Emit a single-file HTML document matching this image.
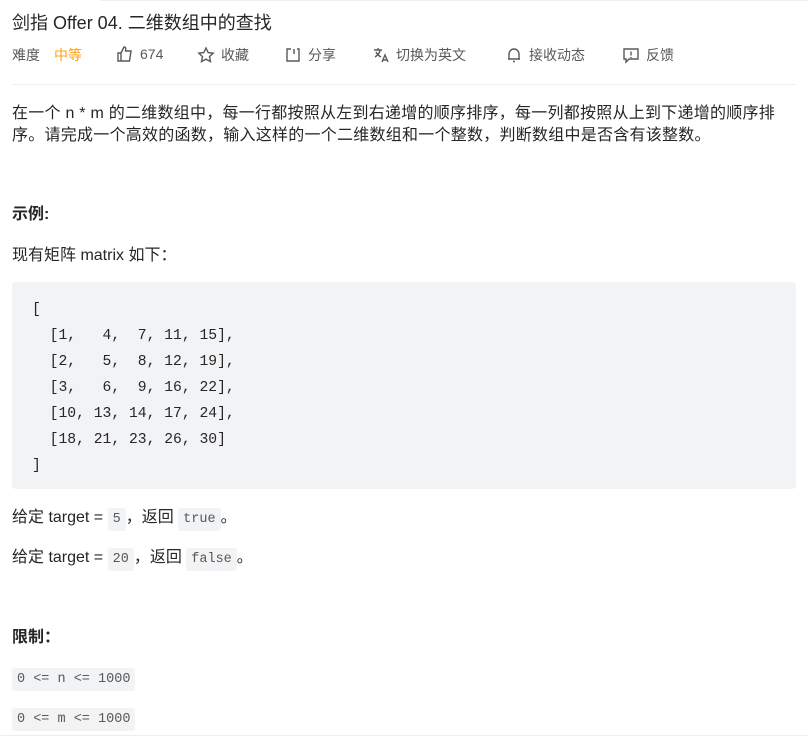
<!DOCTYPE html>
<html><head><meta charset="utf-8"><style>
body{margin:0;width:808px;height:738px;background:#fff;font-family:"Liberation Sans","Noto Sans CJK SC",sans-serif;color:#262626;position:relative;overflow:hidden}
.a{position:absolute;white-space:nowrap}
.t{left:12px;top:9px;font-size:18px;color:#262626}
.m{top:45px;font-size:14px;color:#595959;display:flex;align-items:center;gap:6px}
.p{left:12px;font-size:16px;line-height:22px;color:#262626}
code{font-family:"Liberation Mono","DejaVu Sans Mono",monospace;background:#f2f3f5;border-radius:3px;padding:4px 5px;font-size:13.5px;color:#595959}
pre{position:absolute;left:12px;top:282px;width:784px;height:207px;margin:0;background:#f2f3f5;border-radius:4px;font-family:"Liberation Mono","DejaVu Sans Mono",monospace;font-size:14.7px;line-height:26px;color:#262626;box-sizing:border-box;padding:15px 0 0 20px}
svg{stroke:#595959;fill:none;stroke-width:1.4}
</style></head><body>
<div class="a" style="left:100px;right:0;top:0;height:1px;background:#eee"></div>
<div class="a t">剑指 Offer 04. 二维数组中的查找</div>
<div class="a m" style="left:12px">难度 <span style="color:#ffa116;margin-left:8px">中等</span></div>
<div class="a m" style="left:116px"><svg width="18" height="18" viewBox="0 0 18 18"><path d="M2 8h3v8H2zM5 8l3-6c2 0 2 2 1.5 4H15l-1.5 10H5"/></svg>674</div>
<div class="a m" style="left:197px"><svg width="18" height="18" viewBox="0 0 18 18"><path d="M9 2l2.2 4.6 5 .6-3.7 3.4 1 5L9 13.2 4.5 15.6l1-5L1.8 7.2l5-.6z"/></svg>收藏</div>
<div class="a m" style="left:284px"><svg width="18" height="18" viewBox="0 0 18 18"><path d="M7 3H3v12h12V3h-2M10 3v5"/></svg>分享</div>
<div class="a m" style="left:372px"><svg width="18" height="18" viewBox="0 0 18 18"><path d="M2 4h8M6 2v2M3 11c3-2 5-4 5-7M4 6c1 2 3 4 5 5M10 16l3-7 3 7M11 14h4"/></svg>切换为英文</div>
<div class="a m" style="left:505px"><svg width="18" height="18" viewBox="0 0 18 18"><path d="M4 13V8a5 5 0 0110 0v5zM3 13h12M8 15.5h2"/></svg>接收动态</div>
<div class="a m" style="left:622px"><svg width="18" height="18" viewBox="0 0 18 18"><path d="M2 3h14v10H7l-3 3v-3H2zM9 5.5v4M9 11v1"/></svg>反馈</div>
<div class="a" style="left:12px;right:12px;top:84px;height:1px;background:#eee"></div>
<div class="a p" style="top:103px;letter-spacing:0.25px">在一个 n * m 的二维数组中，每一行都按照从左到右递增的顺序排序，每一列都按照从上到下递增的顺序排<br>序。请完成一个高效的函数，输入这样的一个二维数组和一个整数，判断数组中是否含有该整数。</div>
<div class="a p" style="top:204px;font-weight:bold">示例:</div>
<div class="a p" style="top:245px">现有矩阵 matrix 如下：</div>
<pre>[
  [1,   4,  7, 11, 15],
  [2,   5,  8, 12, 19],
  [3,   6,  9, 16, 22],
  [10, 13, 14, 17, 24],
  [18, 21, 23, 26, 30]
]</pre>
<div class="a p" style="top:507px">给定 target = <code>5</code>，返回 <code>true</code>。</div>
<div class="a p" style="top:547px">给定 target = <code>20</code>，返回 <code>false</code>。</div>
<div class="a p" style="top:627px;font-weight:bold">限制：</div>
<div class="a p" style="top:667px"><code>0 &lt;= n &lt;= 1000</code></div>
<div class="a p" style="top:707px"><code>0 &lt;= m &lt;= 1000</code></div>
<div class="a" style="left:0;right:0;top:735px;height:1px;background:#eee"></div>
</body></html>
